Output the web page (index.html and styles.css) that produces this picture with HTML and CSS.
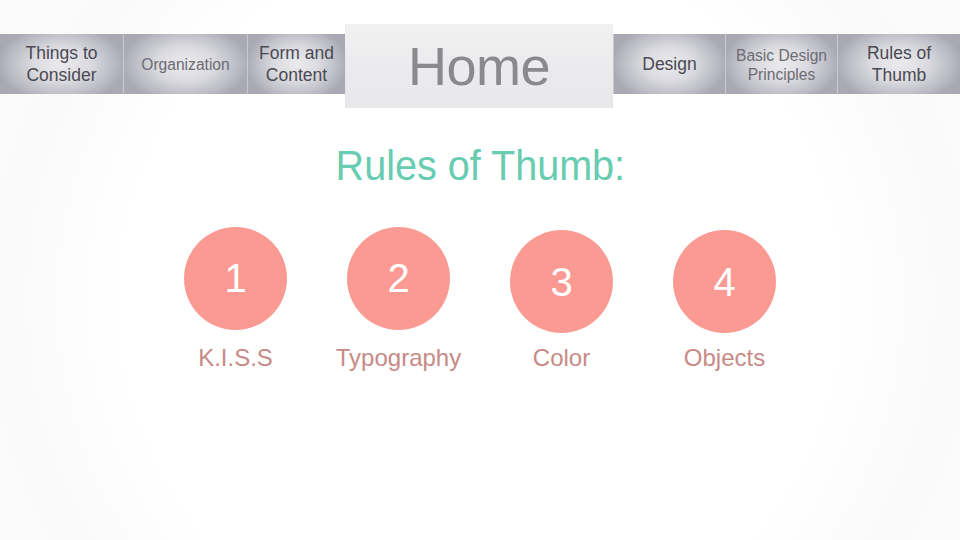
FILE: index.html
```html
<!DOCTYPE html>
<html lang="en">
<head>
<meta charset="utf-8">
<title>Rules of Thumb</title>
<link rel="stylesheet" href="styles.css">
</head>
<body>
<div class="slide">
  <nav class="nav">
    <div class="tab w123"><span class="t-dark">Things to<br>Consider</span></div>
    <div class="tab w124"><span class="t-light">Organization</span></div>
    <div class="tab w98"><span class="t-dark">Form and<br>Content</span></div>
    <div class="home"><span>Home</span></div>
    <div class="tab w112"><span class="t-dark">Design</span></div>
    <div class="tab w112"><span class="t-light t-two">Basic Design<br>Principles</span></div>
    <div class="tab w123"><span class="t-dark">Rules of<br>Thumb</span></div>
  </nav>

  <h1 class="title"><span>Rules of Thumb:</span></h1>

  <div class="rules">
    <div class="rule">
      <div class="dot"><span class="num up">1</span></div>
      <div class="label">K.I.S.S</div>
    </div>
    <div class="rule">
      <div class="dot"><span class="num up">2</span></div>
      <div class="label">Typography</div>
    </div>
    <div class="rule low">
      <div class="dot"><span class="num">3</span></div>
      <div class="label">Color</div>
    </div>
    <div class="rule low">
      <div class="dot"><span class="num">4</span></div>
      <div class="label">Objects</div>
    </div>
  </div>
</div>
</body>
</html>
```

FILE: styles.css
```css
* { box-sizing: border-box; }

html, body {
  margin: 0;
  padding: 0;
}

body {
  width: 960px;
  height: 540px;
  overflow: hidden;
  font-family: "Liberation Sans", Arial, sans-serif;
  background: #fdfdfd;
}

.slide {
  width: 960px;
  height: 540px;
  padding-top: 34px;
  background:
    radial-gradient(circle at 480px 300px, #ffffff 0, #ffffff 360px, #fafafa 460px, #fcfcfc 650px);
}

/* ---------- navigation ---------- */
.nav {
  display: flex;
  height: 60px;
  align-items: flex-start;
}

.tab {
  height: 60px;
  display: flex;
  align-items: center;
  justify-content: center;
  text-align: center;
  background:
    radial-gradient(ellipse 52% 65% at 50% 50%, #ebebef 0%, #dadae0 45%, #b8b8c2 85%, #a9a9b4 100%);
  border-left: 1px solid #c9c9d0;
}

.tab:first-child { border-left: none; }

.w123 { width: 123px; }
.w124 { width: 124px; }
.w98  { width: 98px; }
.w112 { width: 112px; }

.t-dark {
  font-size: 17.5px;
  line-height: 22px;
  color: #4a4a52;
}

.t-light {
  font-size: 15.6px;
  line-height: 19px;
  color: #6c6c72;
}

.t-two { padding-top: 1px; }

.home {
  width: 268px;
  height: 84px;
  margin-top: -10px;
  display: flex;
  align-items: center;
  justify-content: center;
  background: linear-gradient(#f2f2f3 0%, #ececee 40%, #e8e8ea 100%);
  box-shadow: inset 0 0 2px rgba(0,0,0,0.05);
}

.home span {
  font-size: 54px;
  line-height: 60px;
  color: #8a8a8c;
  letter-spacing: -0.5px;
}

/* ---------- title ---------- */
.title {
  margin: 48px 0 0;
  text-align: center;
  font-weight: normal;
  height: 46px;
}

.title span {
  display: inline-block;
  font-size: 43px;
  line-height: 46px;
  color: #67ccb0;
  transform: scaleX(0.92);
}

/* ---------- rules ---------- */
.rules {
  display: grid;
  grid-template-columns: repeat(4, 163px);
  padding-left: 154px;
  margin-top: 39px;
}

.rule {
  display: flex;
  flex-direction: column;
  align-items: center;
}

.rule.low { padding-top: 3px; }

.dot {
  width: 103px;
  height: 103px;
  border-radius: 50%;
  background: #fb9a93;
  display: flex;
  align-items: center;
  justify-content: center;
}

.num {
  font-size: 40px;
  line-height: 46px;
  color: #ffffff;
}

.num.up { margin-top: -2px; }

.label {
  margin-top: 14px;
  font-size: 24px;
  line-height: 28px;
  color: #c88a86;
}

.rule.low .label { margin-top: 11px; }
```
